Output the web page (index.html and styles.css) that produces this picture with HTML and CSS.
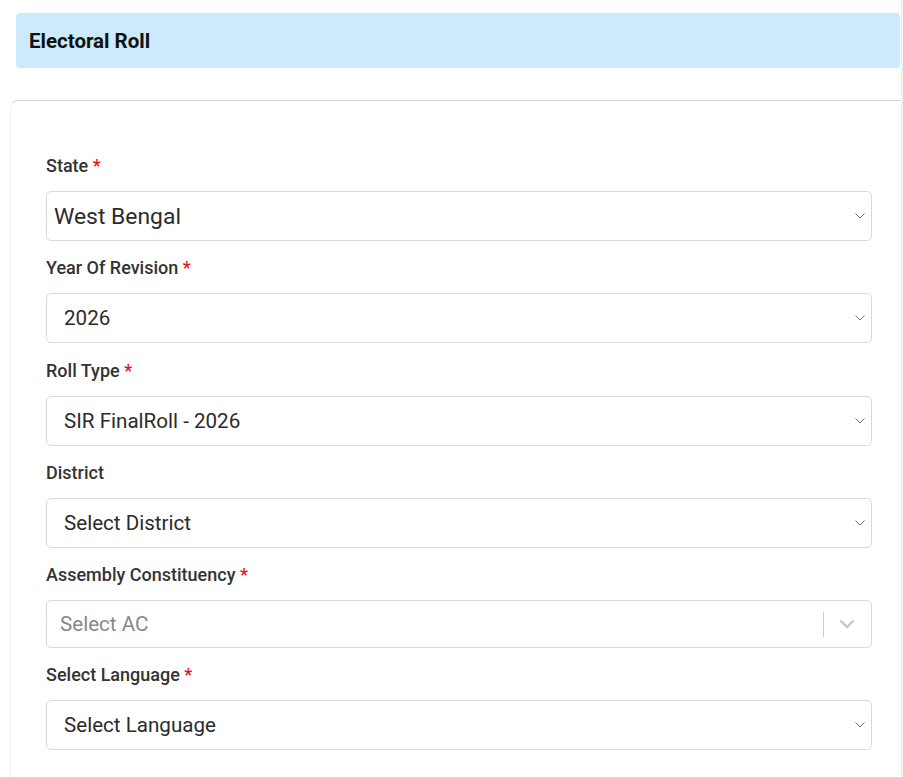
FILE: index.html
```html
<!DOCTYPE html>
<html lang="en">
<head>
    <meta charset="UTF-8">
    <meta name="viewport" content="width=device-width, initial-scale=1.0">
    <title>Electoral Roll</title>
    <link rel="stylesheet" href="styles.css">
</head>
<body>
    <div class="page-title">Electoral Roll</div>

    <div class="card">
        <div class="field">
            <label class="field-label">State <span class="req">*</span></label>
            <div class="select select-state">
                <span class="select-value">West Bengal</span>
                <svg class="caret" width="10" height="6" viewBox="0 0 10 6"><path d="M0.5 0.5 L5 5 L9.5 0.5" fill="none" stroke="#777" stroke-width="1"/></svg>
            </div>
        </div>

        <div class="field">
            <label class="field-label">Year Of Revision <span class="req">*</span></label>
            <div class="select">
                <span class="select-value">2026</span>
                <svg class="caret" width="10" height="6" viewBox="0 0 10 6"><path d="M0.5 0.5 L5 5 L9.5 0.5" fill="none" stroke="#777" stroke-width="1"/></svg>
            </div>
        </div>

        <div class="field">
            <label class="field-label">Roll Type <span class="req">*</span></label>
            <div class="select">
                <span class="select-value">SIR FinalRoll - 2026</span>
                <svg class="caret" width="10" height="6" viewBox="0 0 10 6"><path d="M0.5 0.5 L5 5 L9.5 0.5" fill="none" stroke="#777" stroke-width="1"/></svg>
            </div>
        </div>

        <div class="field">
            <label class="field-label">District</label>
            <div class="select">
                <span class="select-value">Select District</span>
                <svg class="caret" width="10" height="6" viewBox="0 0 10 6"><path d="M0.5 0.5 L5 5 L9.5 0.5" fill="none" stroke="#777" stroke-width="1"/></svg>
            </div>
        </div>

        <div class="field">
            <label class="field-label">Assembly Constituency <span class="req">*</span></label>
            <div class="select select-ac">
                <span class="select-placeholder">Select AC</span>
                <span class="indicator-sep"></span>
                <svg class="ac-caret" width="16" height="10" viewBox="0 0 16 10"><path d="M1.5 1.5 L8 8 L14.5 1.5" fill="none" stroke="#c8c8c8" stroke-width="2.4"/></svg>
            </div>
        </div>

        <div class="field">
            <label class="field-label">Select Language <span class="req">*</span></label>
            <div class="select">
                <span class="select-value">Select Language</span>
                <svg class="caret" width="10" height="6" viewBox="0 0 10 6"><path d="M0.5 0.5 L5 5 L9.5 0.5" fill="none" stroke="#777" stroke-width="1"/></svg>
            </div>
        </div>
    </div>
</body>
</html>
```

FILE: styles.css
```css
body {
    margin: 0;
    font-family: 'Roboto', 'Liberation Sans', sans-serif;
    background-color: #fff;
    color: #333;
    border-right: 2px solid #f0f0f0;
    min-height: 777px;
    box-sizing: border-box;
}

.page-title {
    margin: 13px 1px 0 16px;
    height: 55px;
    padding-left: 13px;
    display: flex;
    align-items: center;
    background-color: #cceafb;
    border-radius: 4px;
    font-size: 20.5px;
    font-weight: 700;
    color: #111;
}

.card {
    margin: 32px 0 0 10px;
    border-top: 1px solid #d4d4d4;
    border-left: 1px solid #f2f2f2;
    border-top-left-radius: 8px;
    padding: 55px 29px 20px 35px;
}

.field {
    margin-bottom: 17.25px;
}

.field-label {
    display: block;
    height: 20px;
    font-size: 18px;
    line-height: 20px;
    font-weight: 500;
    color: #333;
    margin-bottom: 15px;
}

.req {
    color: #e8111a;
    line-height: 20px;
}

.select {
    height: 50px;
    border: 1px solid #dadada;
    border-radius: 5px;
    box-sizing: border-box;
    display: flex;
    align-items: center;
    padding: 0 6px 0 17px;
    font-size: 20.6px;
    color: #2b2b2b;
}

.select-value {
    flex: 1;
}

.select-state {
    padding-left: 7px;
    font-size: 22.9px;
}

.caret {
    flex: none;
}

.select-ac {
    height: 48px;
    padding: 0 16px 0 13px;
}

.select-placeholder {
    flex: 1;
    color: #888;
}

.indicator-sep {
    width: 1px;
    height: 25px;
    background-color: #ccc;
    margin-right: 15px;
}
```
